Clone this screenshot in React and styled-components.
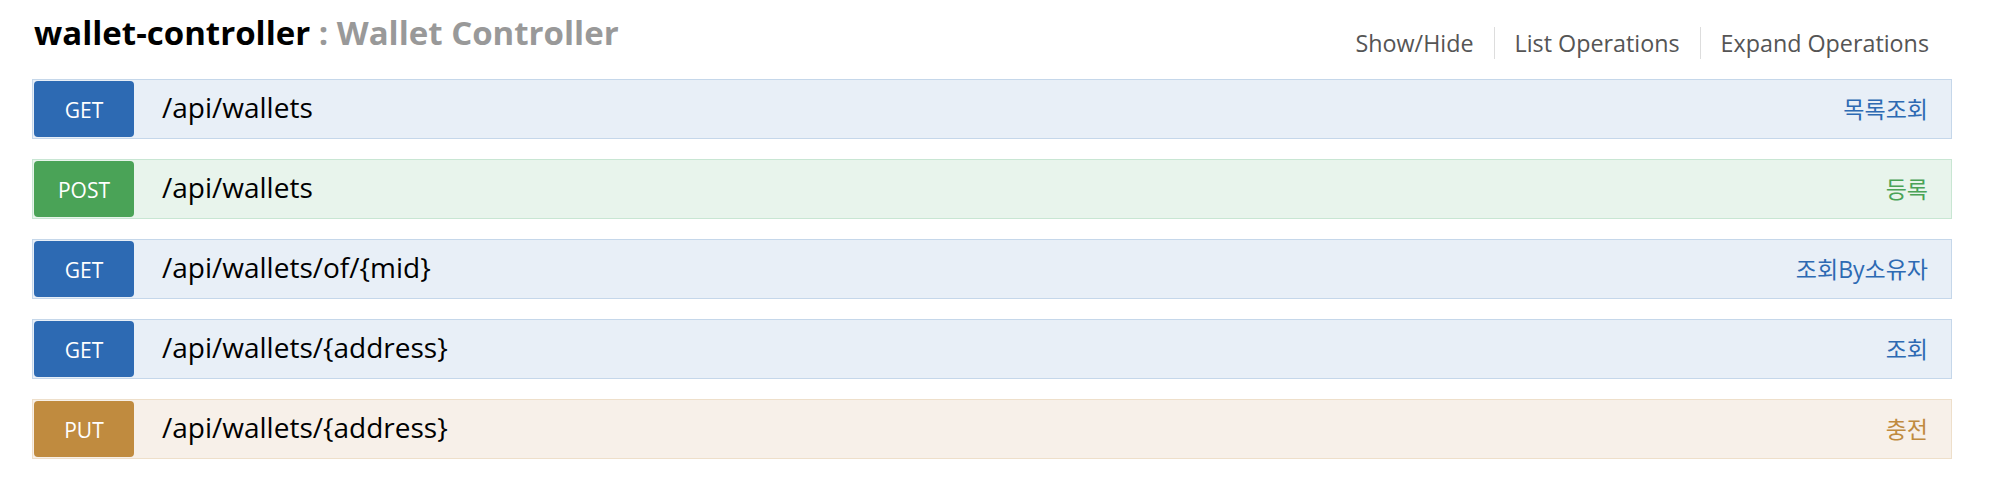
import React from 'react'
import styled, { createGlobalStyle } from 'styled-components'

const GlobalStyle = createGlobalStyle`
  body {
    margin: 0;
    background: #fff;
    font-family: "Open Sans", "Noto Sans CJK KR", sans-serif;
  }
`

const methodColors = {
  GET: { badge: '#2d6ab3', bg: '#e8eff7', border: '#c5d7ea' },
  POST: { badge: '#4aa357', bg: '#e8f4ec', border: '#c8e6d3' },
  PUT: { badge: '#c08b3f', bg: '#f7f0e9', border: '#eedfca' },
}

const Page = styled.div`
  width: 1920px;
  padding: 0 0 20px 32px;
`

const Header = styled.div`
  display: flex;
  justify-content: space-between;
  align-items: flex-start;
  height: 79px;
`

const Title = styled.h2`
  margin: 13px 0 0 2px;
  font-size: 33px;
  line-height: 40px;
  font-weight: 700;
  color: #000;
`

const SubTitle = styled.span`
  color: #999;
`

const Options = styled.ul`
  display: flex;
  list-style: none;
  margin: 27px 23px 0 0;
  padding: 0;
`

const OptionItem = styled.li`
  font-size: 23.3px;
  line-height: 32px;
  color: #555;
  padding: 0 20px;
  border-right: 1px solid #ddd;

  &:last-child {
    border-right: none;
    padding-right: 0;
  }
`

const Operations = styled.div`
  display: flex;
  flex-direction: column;
  gap: 20px;
`

const Row = styled.div`
  display: flex;
  align-items: baseline;
  padding: 1px;
  background: ${(p) => methodColors[p.$method].bg};
  border: 1px solid ${(p) => methodColors[p.$method].border};
`

const Badge = styled.span`
  width: 100px;
  height: 56px;
  line-height: 58px;
  text-align: center;
  font-size: 21px;
  color: #fff;
  border-radius: 4px;
  background: ${(p) => methodColors[p.$method].badge};
`

const Path = styled.span`
  margin-left: 28px;
  font-size: 28px;
  color: #000;
`

const Summary = styled.span`
  margin-left: auto;
  padding-right: 22px;
  font-size: 23px;
  color: ${(p) => methodColors[p.$method].badge};
`

const operations = [
  { method: 'GET', path: '/api/wallets', summary: '목록조회' },
  { method: 'POST', path: '/api/wallets', summary: '등록' },
  { method: 'GET', path: '/api/wallets/of/{mid}', summary: '조회By소유자' },
  { method: 'GET', path: '/api/wallets/{address}', summary: '조회' },
  { method: 'PUT', path: '/api/wallets/{address}', summary: '충전' },
]

export default function App() {
  return (
    <Page>
      <GlobalStyle />
      <Header>
        <Title>
          wallet-controller <SubTitle>: Wallet Controller</SubTitle>
        </Title>
        <Options>
          <OptionItem>Show/Hide</OptionItem>
          <OptionItem>List Operations</OptionItem>
          <OptionItem>Expand Operations</OptionItem>
        </Options>
      </Header>
      <Operations>
        {operations.map((op, i) => (
          <Row key={i} $method={op.method}>
            <Badge $method={op.method}>{op.method}</Badge>
            <Path>{op.path}</Path>
            <Summary $method={op.method}>{op.summary}</Summary>
          </Row>
        ))}
      </Operations>
    </Page>
  )
}
